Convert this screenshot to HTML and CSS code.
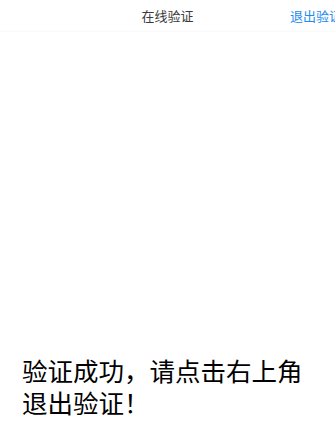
FILE: index.html
```html
<!DOCTYPE html>
<html lang="zh-CN">
<head>
<meta charset="utf-8">
<title>在线验证</title>
<link rel="stylesheet" href="styles.css">
</head>
<body>
<div class="page">
  <header class="topbar">
    <span class="spacer"></span>
    <h1 class="title">在线验证</h1>
    <a class="exit" href="#">退出验证</a>
  </header>
  <main class="content">
    <p class="message">验证成功，请点击右上角退出验证！</p>
  </main>
</div>
</body>
</html>
```
FILE: styles.css
```css
html, body {
  margin: 0;
  padding: 0;
  background: #ffffff;
  overflow: hidden;
}
body {
  font-family: "Noto Sans CJK SC", "Noto Sans", sans-serif;
}
.page {
  display: flex;
  flex-direction: column;
  height: 430px;
}
.topbar {
  display: grid;
  grid-template-columns: 1fr auto 1fr;
  align-items: center;
  height: 31px;
  border-bottom: 1px solid #fafafa;
  flex-shrink: 0;
}
.title {
  margin: 0;
  font-size: 13px;
  font-weight: normal;
  color: #3a3a3a;
  line-height: 16px;
}
.exit {
  justify-self: end;
  margin-right: -7px;
  font-size: 13px;
  line-height: 16px;
  color: #1e8cf0;
  text-decoration: none;
  white-space: nowrap;
}
.content {
  flex: 1;
  display: flex;
  flex-direction: column;
  justify-content: flex-end;
  padding: 0 22px 12px 22px;
}
.message {
  margin: 0;
  font-size: 25.5px;
  line-height: 32px;
  color: #000000;
}
```
